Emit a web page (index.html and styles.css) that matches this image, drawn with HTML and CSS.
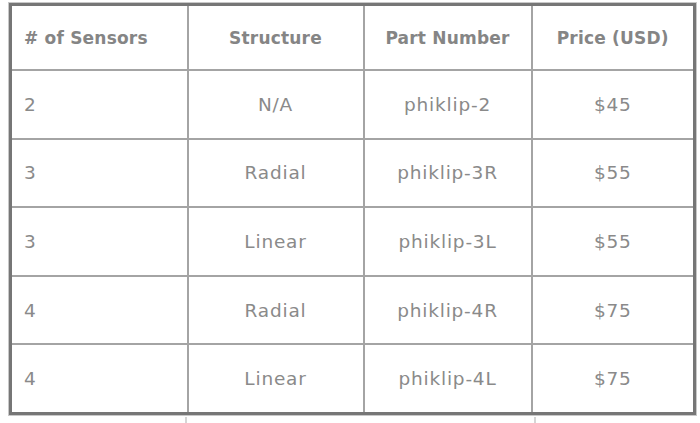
FILE: index.html
```html
<!DOCTYPE html>
<html>
<head>
<meta charset="utf-8">
<link rel="stylesheet" href="styles.css">
</head>
<body>
<div class="wrap">
<table class="pricing">
  <colgroup>
    <col class="c1"><col class="c2"><col class="c3"><col class="c4">
  </colgroup>
  <thead>
    <tr><th class="left">#&nbsp;of Sensors</th><th>Structure</th><th>Part Number</th><th>Price (USD)</th></tr>
  </thead>
  <tbody>
    <tr><td class="left">2</td><td>N/A</td><td>phiklip-2</td><td>$45</td></tr>
    <tr><td class="left">3</td><td>Radial</td><td>phiklip-3R</td><td>$55</td></tr>
    <tr><td class="left">3</td><td>Linear</td><td>phiklip-3L</td><td>$55</td></tr>
    <tr><td class="left">4</td><td>Radial</td><td>phiklip-4R</td><td>$75</td></tr>
    <tr><td class="left">4</td><td>Linear</td><td>phiklip-4L</td><td>$75</td></tr>
  </tbody>
</table>
<div class="ticks"><span class="tick t1"></span><span class="tick t2"></span></div>
</div>
</body>
</html>
```
FILE: styles.css
```css
html, body { margin: 0; padding: 0; background: #fff; }
body { font-family: "DejaVu Sans", "Noto Sans", sans-serif; color: #858585; }
.wrap { padding: 3px 0 0 9px; width: 685px; }
.pricing {
  border-collapse: collapse;
  table-layout: fixed;
  width: 684px;
  border: 3px solid #767676;
  box-shadow: 0 0 0 1px #c8c8c8;
}
.c1 { width: 177px; }
.c2 { width: 176px; }
.c3 { width: 168px; }
.c4 { width: 163px; }
th, td {
  border: 2px solid #a4a4a4;
  text-align: center;
  padding: 0 12px;
}
th {
  height: 63px;
  font-size: 17px;
  font-weight: 700;
  letter-spacing: 0.2px;
  color: #858585;
}
td {
  height: 66.6px;
  font-size: 18.5px;
  font-weight: 400;
  letter-spacing: 0.8px;
  color: #8a8a8a;
}
.left { text-align: left; }
.ticks { position: relative; height: 10px; }
.tick { position: absolute; top: 2px; width: 2px; height: 8px; background: #d6d6d6; }
.t1 { left: 176px; }
.t2 { left: 525px; }
```
